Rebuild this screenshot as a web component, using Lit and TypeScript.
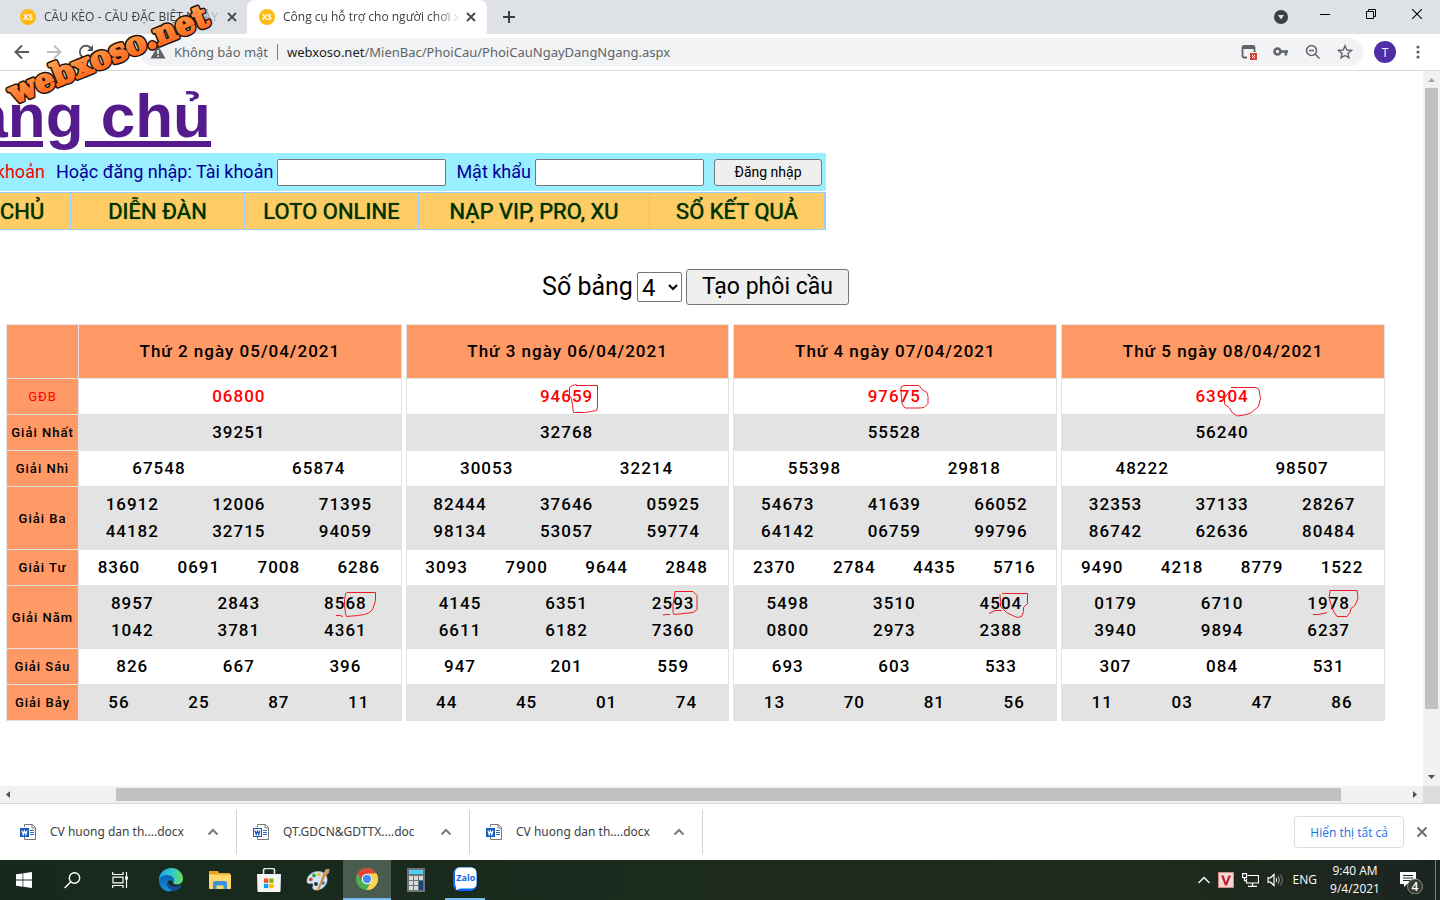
import { LitElement, html, css, svg, nothing } from "lit";
import { customElement, property } from "lit/decorators.js";

interface Draw {
  day: string;
  prizes: string[][];
}

const PRIZES: { label: string; perRow: number }[] = [
  { label: "GĐB", perRow: 1 },
  { label: "Giải Nhất", perRow: 1 },
  { label: "Giải Nhì", perRow: 2 },
  { label: "Giải Ba", perRow: 3 },
  { label: "Giải Tư", perRow: 4 },
  { label: "Giải Năm", perRow: 3 },
  { label: "Giải Sáu", perRow: 3 },
  { label: "Giải Bảy", perRow: 4 },
];

const draw = (day: string, ...rows: string[]): Draw => ({
  day,
  prizes: rows.map((r) => r.split(" ")),
});

const DRAWS: Draw[] = [
  draw("Thứ 2 ngày 05/04/2021", "06800", "39251", "67548 65874",
    "16912 12006 71395 44182 32715 94059", "8360 0691 7008 6286",
    "8957 2843 8568 1042 3781 4361", "826 667 396", "56 25 87 11"),
  draw("Thứ 3 ngày 06/04/2021", "94659", "32768", "30053 32214",
    "82444 37646 05925 98134 53057 59774", "3093 7900 9644 2848",
    "4145 6351 2593 6611 6182 7360", "947 201 559", "44 45 01 74"),
  draw("Thứ 4 ngày 07/04/2021", "97675", "55528", "55398 29818",
    "54673 41639 66052 64142 06759 99796", "2370 2784 4435 5716",
    "5498 3510 4504 0800 2973 2388", "693 603 533", "13 70 81 56"),
  draw("Thứ 5 ngày 08/04/2021", "63904", "56240", "48222 98507",
    "32353 37133 28267 86742 62636 80484", "9490 4218 8779 1522",
    "0179 6710 1978 3940 9894 6237", "307 084 531", "11 03 47 86"),
];

@customElement("prize-table")
export class PrizeTable extends LitElement {
  @property({ attribute: false }) data!: Draw;
  @property({ type: Boolean }) labelled = false;

  static styles = css`
    :host { display: block; min-width: 0; }
    table {
      width: 100%;
      border-collapse: collapse;
      table-layout: fixed;
      font: 500 17px/27px Roboto, sans-serif;
      letter-spacing: 1px;
      color: #000;
    }
    th, td {
      box-sizing: border-box;
      height: 36px;
      padding: 4px 2px 4px 0;
      border: 1px solid #e3e3e3;
      font-weight: 500;
      text-align: center;
    }
    th { padding: 4px 0; background: #f96; }
    .label-col { width: 72px; }
    .label { font-size: 13px; white-space: nowrap; }
    .day { height: 54px; }
    .grey { background: #e3e3e3; }
    .top, .top-label { color: #f00; }
    .top-label { font-weight: 400; }
    .numbers { display: grid; }
    .n1 { grid-template-columns: 1fr; }
    .n2 { grid-template-columns: repeat(2, 1fr); }
    .n3 { grid-template-columns: repeat(3, 1fr); }
    .n4 { grid-template-columns: repeat(4, 1fr); }
  `;

  render() {
    return html`<table>
      <colgroup>${this.labelled ? html`<col class="label-col" />` : nothing}<col /></colgroup>
      <thead><tr>
        ${this.labelled ? html`<th class="day"></th>` : nothing}
        <th class="day" scope="col">${this.data.day}</th>
      </tr></thead>
      <tbody>
        ${PRIZES.map((p, i) => html`<tr>
          ${this.labelled ? html`<th scope="row" class="label ${i === 0 ? "top-label" : ""}">${p.label}</th>` : nothing}
          <td class="${i % 2 ? "grey" : ""} ${i === 0 ? "top" : ""}">
            <div class="numbers n${p.perRow}">${this.data.prizes[i].map((n) => html`<span>${n}</span>`)}</div>
          </td>
        </tr>`)}
      </tbody>
    </table>`;
  }
}

const cross = svg`<path d="M1 1 9 9M9 1 1 9" stroke="#45494d" stroke-width="1.8" fill="none"/>`;
const wordIcon = (outlined: boolean) => html`<svg width="16" height="16" viewBox="0 0 16 16" aria-hidden="true">
  <path d="M4.5 3V.5h8L15.500 3.500V15.500H4.500V13" fill="#fff" stroke="#777"/><path d="M12 .5V4h3.500" fill="none" stroke="#777"/>
  <path d="M10 6.500h4M10 8.500h4M10 10.500h4" stroke="#2b6cc4"/>
  <rect x=".5" y="4.500" width="8" height="8" fill="${outlined ? "#fff" : "#185abd"}" stroke="#185abd"/>
  <path d="M2 6.500 3.200 10.500 4.500 7 5.800 10.500 7 6.500" fill="none" stroke="${outlined ? "#185abd" : "#fff"}" stroke-width="1.200"/></svg>`;
const chevron = html`<svg width="12" height="8" viewBox="0 0 12 8" aria-hidden="true"><path d="M1.500 6.500 6 2l4.500 4.500" fill="none" stroke="#777b80" stroke-width="2"/></svg>`;

@customElement("app-root")
export class AppRoot extends LitElement {
  static styles = css`
    :host { display: block; }
    * { box-sizing: border-box; }
    button { font-family: inherit; cursor: pointer; }
    svg { display: block; flex: none; }
    a { text-decoration: none; color: inherit; }
    .window {
      display: flex; flex-direction: column; height: 100vh; overflow: hidden;
      position: relative; background: #fff;
      font: 12px/16px "Open Sans", "Noto Sans", sans-serif; color: #3c4043;
    }
    .plain { border: 0; padding: 0; background: none; display: grid; place-items: center; }

    /* tab strip */
    .tabs { display: flex; height: 34px; flex: none; padding-left: 8px; background: #dee1e6; }
    .tab { display: flex; align-items: center; width: 239px; padding: 0 9px 0 12px; }
    .tab.active { width: 240px; padding-right: 10px; background: #fff; border-radius: 8px 8px 0 0; }
    .title {
      flex: 1; margin: 0 4px 0 8px; overflow: hidden; white-space: nowrap;
      mask-image: linear-gradient(90deg, #000 85%, transparent);
    }
    .close { width: 12px; height: 16px; }
    .new-tab { width: 44px; }
    .caption { display: flex; margin-left: auto; }
    .caption button { width: 46px; height: 28px; }
    .caption .search-tabs { width: 42px; height: 34px; }

    /* toolbar */
    .toolbar {
      display: flex; align-items: center; height: 37px; flex: none;
      padding: 0 6px; border-bottom: 1px solid #d9dadc;
    }
    .nav { width: 32px; height: 32px; }
    .address {
      display: flex; align-items: center; flex: 1; height: 28px; margin: 0 5px 0 38px;
      padding: 0 10px; border-radius: 14px; background: #f1f3f4;
      font-family: "Noto Sans", "Open Sans", sans-serif;
      font-size: 13px; color: #5f6368; white-space: nowrap;
    }
    .insecure { margin-left: 8px; padding-right: 9px; border-right: 1px solid #7c8084; }
    .url { flex: 1; margin-left: 9px; }
    .host { color: #202124; }
    .actions { display: flex; gap: 16px; }
    .avatar {
      width: 22px; height: 22px; margin: 0 6px; border-radius: 50%;
      background: #512da8; color: #fff; font-size: 12px;
    }
    .more { width: 32px; height: 32px; }
    .watermark { position: absolute; left: 0; top: 0; pointer-events: none; }
    .mark { font: 700 31px "DejaVu Serif", serif; }

    /* page */
    .view { flex: 1; min-height: 0; display: grid; grid-template: minmax(0, 1fr) 17px / minmax(0, 1fr) 17px; }
    .page { position: relative; overflow: hidden; font-family: Roboto, sans-serif; color: #000; }
    .clip { display: flex; justify-content: flex-end; overflow: hidden; white-space: nowrap; }
    .home { width: 211px; height: 82px; margin: 0; font: 700 62px/90px "Liberation Sans", sans-serif; }
    .home a { color: #551a8b; text-decoration: underline; }
    .login {
      width: 826px; height: 39px; padding: 0 4px; align-items: center; gap: 4px;
      background: #9ef; border-bottom: 1px solid #fff; color: #009; font-size: 18px; line-height: 24px;
    }
    .register { color: #f00; margin-right: 7px; }
    .login input { width: 169px; height: 27px; margin-right: 6px; flex: none; border: 1px solid #767676; border-radius: 2px; font-size: 16px; }
    .btn { border: 1px solid #767676; border-radius: 3px; background: #efefef; color: #000; }
    .login .btn { width: 108px; height: 27px; flex: none; padding: 0; font-size: 14px; }
    .menu { width: 826px; height: 38px; border: solid #9cf; border-width: 1px 2px 1px 0; background: #fc6; }
    .menu a {
      flex: none; width: 174px; border-left: 1px solid #9cf; text-align: center;
      font-size: 22px; line-height: 38px; color: #030; text-shadow: 0 0 1px #030;
    }
    .menu .wide { width: 231px; }
    .menu .last { width: 175px; }
    .form { display: flex; justify-content: center; align-items: center; gap: 4px; padding: 39px 32px 0 0; font-size: 25px; line-height: 36px; }
    .form select { width: 45px; height: 30px; padding: 0; font: inherit; font-size: 24px; line-height: 28px; border: 1px solid #767676; border-radius: 2px; background: #fff; }
    .form .btn { height: 36px; padding: 0 15px; font-size: 23px; line-height: 34px; }
    .boards { display: flex; gap: 4px; padding: 19px 38px 0 6px; }
    .board { flex: 81 1 0; }
    .board.first { flex: 99 1 0; }
    .ink { position: absolute; left: 0; top: 0; pointer-events: none; }
    .bar { background: #f1f1f1; display: flex; align-items: center; justify-content: space-between; }
    .bar.v { flex-direction: column; }
    .thumb { background: #c1c1c1; }
    .v .thumb { width: 13px; flex: 621; }
    .v .rest { flex: 60; }
    .h .before { flex: 99; }
    .h .thumb { height: 13px; flex: 1225; }
    .h .rest { flex: 65; }
    .corner { background: #dcdcdc; }

    /* downloads */
    .downloads {
      display: flex; align-items: center; height: 57px; flex: none;
      padding-right: 12px; border-top: 1px solid #d5d6d8;
    }
    .file { display: flex; align-items: center; width: 233px; height: 44px; padding: 0 17px 0 16px; border-right: 1px solid #d0d2d5; }
    .file:first-child { width: 237px; padding-left: 20px; }
    .name { flex: 1; margin-left: 14px; white-space: nowrap; font-family: "Noto Sans", "Open Sans", sans-serif; }
    .show-all {
      height: 32px; margin: 0 12px 0 auto; padding: 0 15px; border: 1px solid #dadce0; border-radius: 4px;
      background: #fff; color: #1a73e8; font-size: 12px;
    }

    /* taskbar */
    .taskbar { display: flex; height: 40px; flex: none; background: linear-gradient(90deg, #17291d, #1b2b1e 45%, #1f2b1d 80%, #1c2420); color: #fff; }
    .task { width: 48px; height: 40px; }
    .apps { display: flex; gap: 1px; margin-left: 3px; }
    .current { background: #4a5b4f; border-bottom: 2px solid #76b9ed; }
    .zalo { width: 40px; margin-left: 4px; border-bottom: 2px solid #76b9ed; }
    .zalo-text { font: 700 9px "Open Sans", sans-serif; }
    .tray { display: flex; align-items: center; margin-left: auto; gap: 8px; }
    .clock { width: 48px; margin-left: 6px; text-align: center; line-height: 18px; white-space: nowrap; display: flex; flex-direction: column; align-items: center; }
    .lang { margin-left: 2px; }
    .notes { width: 28px; height: 28px; margin-left: 8px; }
    .peek { width: 5px; height: 40px; margin-left: 4px; border-left: 1px solid #7a807b; }
    .badge-text { font: 600 12px "Open Sans", sans-serif; }
    .favicon-text { font: 700 8px "Open Sans", sans-serif; }
  `;

  private favicon() {
    return html`<svg width="16" height="16" viewBox="0 0 16 16" aria-hidden="true">
      <circle cx="8" cy="8" r="8" fill="#fdbb11"/>
      <text class="favicon-text" x="8" y="11" text-anchor="middle" fill="#fff">XS</text></svg>`;
  }

  private tab(title: string, active: boolean) {
    return html`<div class="tab ${active ? "active" : ""}">${this.favicon()}
      <span class="title">${title}</span>
      <button class="plain close" aria-label="Đóng"><svg width="10" height="10" viewBox="0 0 10 10">${cross}</svg></button>
    </div>`;
  }

  private file(name: string, outlined = false) {
    return html`<div class="file">${wordIcon(outlined)}<span class="name">${name}</span>
      <button class="plain" aria-label="Tùy chọn">${chevron}</button></div>`;
  }

  private ink() {
    const strokes = [
      "M576 385.500h21.500v22l-1 3-6 1-5 1h-12l-1-7-1-7-2-3v-8l3-2 4-1",
      "M901 387l3-1.500h15l3 4 5 3 1 4v7l-4 4-4 .500h-15l-3-4-1-12z",
      "M1231 387.500h25l3 2 1.500 9-2 8-7 6-5 2-9 1.500-5-3-3-5-5-4v-6l3-4 3-4",
      "M347 592.500h28.500v8l-3 9-3 3-5 2-7 1-11 1-1-3-1-8v-6l1.500-7",
      "M336 615.500h4l3 1",
      "M675 591.500h18l4 4v14l-4 3-9 1-10 1-1-2v-8l1-6z",
      "M663 615l3-.5h4",
      "M1002 593.500h25.500v10l-4 4v4l-2 5-4 1-5-2-6-3-6-6v-4l-.500-8",
      "M989 613.500l6-3h7",
      "M1330 590.500h27l1 8-3 7-4 3-1 4-3 4h-10l-4-6-2-6-2-7 1-6z",
      "M1313 614.500h5l5-1 4-1",
    ];
    return html`<svg class="ink" width="1400" height="600" viewBox="0 71 1400 600" aria-hidden="true">
      ${strokes.map((d) => svg`<path d=${d} fill="none" stroke="#ed1c24"/>`)}</svg>`;
  }

  render() {
    return html`<div class="window">
      <header class="tabs">
        ${this.tab("CẦU KÈO - CẦU ĐẶC BIỆT NGÀY (", false)}
        ${this.tab("Công cụ hỗ trợ cho người chơi xổ số", true)}
        <button class="plain new-tab" aria-label="Thẻ mới"><svg width="12" height="12" viewBox="0 0 12 12"><path d="M6 0v12M0 6h12" stroke="#3c4043" stroke-width="2"/></svg></button>
        <div class="caption">
          <button class="plain search-tabs" aria-label="Tìm thẻ"><svg width="14" height="14" viewBox="0 0 14 14"><circle cx="7" cy="7" r="7" fill="#3c4043"/><path d="M4 5h6L7 9.500z" fill="#dee1e6"/></svg></button>
          <button class="plain" aria-label="Thu nhỏ"><svg width="10" height="10" viewBox="0 0 10 10"><path d="M0 5.500h10" stroke="#000"/></svg></button>
          <button class="plain" aria-label="Khôi phục"><svg width="10" height="10" viewBox="0 0 10 10"><path d="M.5 2.500h7v7h-7zM2.500 2.500v-2h7v7h-2" fill="none" stroke="#000"/></svg></button>
          <button class="plain" aria-label="Đóng"><svg width="10" height="10" viewBox="0 0 10 10"><path d="M0 0 10 10M10 0 0 10" stroke="#000" stroke-width="1.100"/></svg></button>
        </div>
      </header>

      <div class="toolbar">
        <button class="plain nav" aria-label="Quay lại"><svg width="16" height="16" viewBox="0 0 16 16"><path d="M15 8H2M8 1.500 1.500 8 8 14.500" fill="none" stroke="#55595d" stroke-width="1.900"/></svg></button>
        <button class="plain nav" aria-label="Tiếp"><svg width="16" height="16" viewBox="0 0 16 16"><path d="M1 8h13M8 1.500 14.500 8 8 14.500" fill="none" stroke="#babcbe" stroke-width="1.900"/></svg></button>
        <button class="plain nav" aria-label="Tải lại"><svg width="16" height="16" viewBox="0 0 16 16"><path d="M13.500 5A6.200 6.200 0 1 0 14 9.500" fill="none" stroke="#55595d" stroke-width="1.900"/><path d="M15 1v6H9z" fill="#55595d"/></svg></button>
        <div class="address">
          <svg width="16" height="16" viewBox="0 0 16 16" aria-hidden="true"><path d="M8 1.500 15.500 14.500H.5z" fill="#5f6368"/><path d="M8 6v4M8 11.300v1.700" stroke="#fff" stroke-width="1.500"/></svg>
          <span class="insecure">Không bảo mật</span>
          <span class="url"><span class="host">webxoso.net</span>/MienBac/PhoiCau/PhoiCauNgayDangNgang.aspx</span>
          <div class="actions">
            <button class="plain" aria-label="Cửa sổ bật lên bị chặn"><svg width="16" height="16" viewBox="0 0 16 16"><path d="M6 13.500H3a1.500 1.500 0 0 1-1.500-1.500V3.500A1.500 1.500 0 0 1 3 2h9a1.500 1.500 0 0 1 1.500 1.500V8" fill="none" stroke="#5f6368" stroke-width="1.800"/><path d="M1.500 2h12v3h-12z" fill="#5f6368"/><path d="M9 9h7v7H9z" fill="#db4437"/><path d="M11 11l3 3M14 11l-3 3" stroke="#fff"/></svg></button>
            <button class="plain" aria-label="Mật khẩu đã lưu"><svg width="16" height="16" viewBox="0 0 16 16"><circle cx="4.500" cy="7.500" r="3" fill="none" stroke="#5f6368" stroke-width="2.600"/><path d="M7 7.500h8M12.800 8v3.500" stroke="#5f6368" stroke-width="2.600"/></svg></button>
            <button class="plain" aria-label="Thu phóng"><svg width="16" height="16" viewBox="0 0 16 16"><circle cx="6.500" cy="6.500" r="5" fill="none" stroke="#5f6368" stroke-width="1.500"/><path d="M10.300 10.300 14.500 14.500M4 6.500h5" stroke="#5f6368" stroke-width="1.500"/></svg></button>
            <button class="plain" aria-label="Đánh dấu trang"><svg width="16" height="16" viewBox="0 0 16 16"><path d="M8 1.800 9.800 6l4.700.4-3.600 3 1.100 4.500L8 11.500 4 13.900l1.100-4.500-3.600-3L6.200 6z" fill="none" stroke="#5f6368" stroke-width="1.400"/></svg></button>
          </div>
        </div>
        <button class="plain avatar" aria-label="Hồ sơ">T</button>
        <button class="plain more" aria-label="Menu"><svg width="4" height="14" viewBox="0 0 4 14" fill="#5f6368"><circle cx="2" cy="2" r="1.600"/><circle cx="2" cy="7" r="1.600"/><circle cx="2" cy="12" r="1.600"/></svg></button>
      </div>

      <div class="view">
        <main class="page">
          <h1 class="home clip"><a href="#">Trang chủ</a></h1>
          <form class="login clip" @submit=${(e: Event) => e.preventDefault()}>
            <a class="register" href="#">Đăng ký tài khoản</a>
            <label for="user">Hoặc đăng nhập: Tài khoản</label><input id="user" type="text" />
            <label for="pass">Mật khẩu</label><input id="pass" type="password" />
            <button class="btn" type="submit">Đăng nhập</button>
          </form>
          <nav class="menu clip">
            <a href="#">TRANG CHỦ</a><a href="#">DIỄN ĐÀN</a><a href="#">LOTO ONLINE</a>
            <a class="wide" href="#">NẠP VIP, PRO, XU</a><a class="last" href="#">SỔ KẾT QUẢ</a>
          </nav>
          <div class="form">
            <label for="count">Số bảng</label>
            <select id="count"><option>1</option><option>2</option><option>3</option><option selected>4</option></select>
            <button class="btn" type="button">Tạo phôi cầu</button>
          </div>
          <section class="boards">
            ${DRAWS.map((d, i) => html`<prize-table class="board ${i === 0 ? "first" : ""}" .data=${d} ?labelled=${i === 0}></prize-table>`)}
          </section>
          ${this.ink()}
        </main>
        <div class="bar v" aria-hidden="true">
          <svg width="17" height="17" viewBox="0 0 17 17"><path d="M5 11h7L8.500 7z" fill="#a3a3a3"/></svg>
          <div class="thumb"></div><div class="rest"></div>
          <svg width="17" height="17" viewBox="0 0 17 17"><path d="M5 6h7L8.500 10z" fill="#505050"/></svg>
        </div>
        <div class="bar h" aria-hidden="true">
          <svg width="17" height="17" viewBox="0 0 17 17"><path d="M10 5v7L6 8.500z" fill="#505050"/></svg>
          <div class="before"></div><div class="thumb"></div><div class="rest"></div>
          <svg width="17" height="17" viewBox="0 0 17 17"><path d="M7 5v7l4-3.500z" fill="#505050"/></svg>
        </div>
        <div class="corner"></div>
      </div>

      <section class="downloads">
        ${this.file("CV huong dan th....docx")}${this.file("QT.GDCN&GDTTX....doc", true)}${this.file("CV huong dan th....docx")}
        <button class="show-all">Hiển thị tất cả</button>
        <button class="plain" aria-label="Đóng"><svg width="12" height="12" viewBox="0 0 12 12"><path d="M1.500 1.500l9 9M10.500 1.500l-9 9" stroke="#6e7276" stroke-width="2"/></svg></button>
      </section>

      <footer class="taskbar">
        <button class="plain task" aria-label="Bắt đầu"><svg width="16" height="16" viewBox="0 0 16 16" fill="#fff"><path d="M0 2.300 6.600 1.400v6.200H0zM7.300 1.300 16 0v7.600H7.300zM0 8.400h6.600v6.300L0 13.800zM7.300 8.400H16V16l-8.700-1.300z"/></svg></button>
        <button class="plain task" aria-label="Tìm kiếm"><svg width="17" height="17" viewBox="0 0 17 17"><circle cx="10.500" cy="6" r="5.200" fill="none" stroke="#fff" stroke-width="1.400"/><path d="M6.800 9.800.7 16" stroke="#fff" stroke-width="1.500"/></svg></button>
        <button class="plain task" aria-label="Chế độ xem tác vụ"><svg width="17" height="16" viewBox="0 0 17 16"><path d="M.7 0v2.500H11V0M.7 16v-2.500H11V16M1 5.200h10v5.600H1zM14.500 0v16" fill="none" stroke="#fff" stroke-width="1.200"/><path d="M13 4.500h3v3h-3z" fill="#fff"/></svg></button>
        <div class="apps">
          <button class="plain task" aria-label="Edge"><svg width="24" height="24" viewBox="0 0 24 24">
            <defs><linearGradient id="edge-top"><stop stop-color="#1aa5e8"/><stop offset=".55" stop-color="#35c6d0"/><stop offset="1" stop-color="#66df55"/></linearGradient>
            <linearGradient id="edge-low" x2="0" y2="1"><stop stop-color="#0a5fb4"/><stop offset="1" stop-color="#1693dd"/></linearGradient></defs>
            <path d="M0 12C0 5 5.500 0 12 0c7 0 12 5 12 10.500 0 4-3 6-6 6-2.500 0-4-1-4-2 0-.6.900-1 .9-2.600C14.900 9.500 12 8 9 8c-5 0-9 2-9 7z" fill="url(#edge-top)"/>
            <path d="M0 13c.3-3.500 3.500-5.800 7.500-5.800 4.200 0 7.400 2 7.400 4.700 0 1.300-.9 1.900-.9 2.600-1-2-3-3-4.800-1.500-2.700 2.200-.7 8.500 6 9C8 26 0 20.500 0 13z" fill="url(#edge-low)"/>
            <path d="M8.500 13.500C7 18 11 23 15.500 23c3-.5 5.500-2.500 7-5 .4-.8-.3-1-.8-.700-4.700 2.300-11 1.700-13.200-3.800z" fill="#134d93"/></svg></button>
          <button class="plain task" aria-label="Thư mục"><svg width="22" height="19" viewBox="0 0 22 19"><path d="M0 0h9l1 2h11v5H0z" fill="#e9a21c"/><path d="M0 3.500h22V18H0z" fill="#ffd86b"/><path d="M4 18v-6q0-2 2-2h10q2 0 2 2v6h-3.500v-3.500h-7V18z" fill="#3c94dd"/></svg></button>
          <button class="plain task" aria-label="Store"><svg width="24" height="24" viewBox="0 0 24 24"><path d="M6.500 7V2.500q0-2 2-2h7q2 0 2 2V7" fill="none" stroke="#e8e8e8" stroke-width="1.600"/><path d="M0 6h24l-.5 17q0 1-1 1h-21q-1 0-1-1z" fill="#f5f5f5"/><path d="M7 10.500h4.300v4.300H7z" fill="#f25022"/><path d="M12.300 10.500h4.300v4.300h-4.300z" fill="#7fba00"/><path d="M7 15.800h4.300v4.300H7z" fill="#00a4ef"/><path d="M12.300 15.800h4.300v4.300h-4.300z" fill="#ffb900"/></svg></button>
          <button class="plain task" aria-label="Paint"><svg width="24" height="24" viewBox="0 0 24 24"><path d="M1 13C1 7 7 3 13 3.500c6 .5 9 5 8 10-1 5-6 8.500-11 8.500-3 0-4-2-3-4 1-2-1-3-3-2.500S1 15 1 13z" fill="#cfe3f2" stroke="#9dbdd4" stroke-width=".6"/><circle cx="4.800" cy="11.500" r="1.800" fill="#e33b32"/><circle cx="8" cy="7.500" r="1.900" fill="#39a84a"/><circle cx="13" cy="6.500" r="1.800" fill="#f0ba1b"/><circle cx="10" cy="16" r="1.900" fill="#26323a"/><circle cx="17" cy="15" r="1.800" fill="#3378d1"/><path d="M20.500 5 13 22l-1.500 1 .2-2.500L18 4z" fill="#d98a35"/><path d="M17.500 5 20 1l3.500 0-.5 4-3 2.500z" fill="#c79b6d"/></svg></button>
          <button class="plain task current" aria-label="Chrome"><svg width="24" height="24" viewBox="0 0 24 24"><circle cx="12" cy="12" r="11" fill="#4caf50"/><path d="M2.500 6.500A11 11 0 0 1 21.500 6.500L12 7a5 5 0 0 0-4.500 7.300z" fill="#e24435"/><path d="M21.500 6.500A11 11 0 0 1 11.500 23L16.300 14.500A5 5 0 0 0 12 6.500z" fill="#fdd34d"/><circle cx="12" cy="12" r="5.300" fill="#fff"/><circle cx="12" cy="12" r="4.200" fill="#4489f4"/></svg></button>
          <button class="plain task" aria-label="Máy tính"><svg width="18" height="24" viewBox="0 0 18 24"><rect width="18" height="24" rx="1" fill="#6d7478"/><path d="M2 2h14v4H2z" fill="#4fd0f5"/><path d="M2 8h4v4H2zM7 8h4v4H7zM12 8h4v4h-4zM2 13h4v4H2zM7 13h4v4H7zM2 18h4v4H2zM7 18h4v4H7z" fill="#d8dcde"/><path d="M12 13h4v9h-4z" fill="#13477d"/></svg></button>
          <button class="plain task zalo" aria-label="Zalo"><svg width="24" height="24" viewBox="0 0 24 24"><rect width="24" height="24" rx="7" fill="#0a68f5"/><path d="M7 .5h11q5.500 0 5.500 6v10q0 5-5.500 5H8q-2 0-3 1l-2.500.5 1-2Q2 19 2 16V6Q2 .5 7 .5z" fill="#fff"/><text class="zalo-text" x="12.800" y="14" text-anchor="middle" fill="#1467e8">Zalo</text></svg></button>
        </div>
        <div class="tray">
          <svg width="12" height="8" viewBox="0 0 12 8" aria-hidden="true"><path d="M.5 7 6 1.500 11.500 7" fill="none" stroke="#fff" stroke-width="1.300"/></svg>
          <svg width="16" height="16" viewBox="0 0 16 16" aria-hidden="true"><path d="M0 0h16v16H0z" fill="#d98a88"/><path d="M1 1h14v14H1z" fill="#f4d7d5"/><path d="M3 3.500h2.500L8 10.500l2.500-7H13l-4 10H7z" fill="#c01f25"/></svg>
          <svg width="17" height="14" viewBox="0 0 17 14" aria-hidden="true"><path d="M5.500 2.500h11v7.500H4.500V6M10.500 10v3M6 13.300h9" fill="none" stroke="#fff" stroke-width="1.200"/><path d="M.6.6h4v4h-4zM2.500 4.600v3H5" fill="none" stroke="#fff" stroke-width="1.100"/></svg>
          <svg width="16" height="14" viewBox="0 0 16 14" aria-hidden="true"><path d="M1 4.800h2.500L7 1.500v11L3.500 9.200H1z" fill="none" stroke="#fff" stroke-width="1.200"/><path d="M9 5q1.500 2 0 4" fill="none" stroke="#fff"/><path d="M11 3.200q3 3.800 0 7.600" fill="none" stroke="#b9beb9"/><path d="M13 1.200q4.500 5.800 0 11.600" fill="none" stroke="#7c837d"/></svg>
          <span class="lang">ENG</span>
          <time class="clock"><span>9:40 AM</span><span>9/4/2021</span></time>
          <button class="plain notes" aria-label="Thông báo"><svg width="28" height="28" viewBox="0 0 28 28"><path d="M5 6h16v12h-9l-3 3v-3H5z" fill="#fff"/><path d="M8 9.500h10M8 12h10M8 14.500h7" stroke="#1d281e"/><circle cx="20" cy="20.500" r="7.500" fill="#333a35" stroke="#8b918c"/><text class="badge-text" x="20" y="25" text-anchor="middle" fill="#fff">4</text></svg></button>
          <div class="peek"></div>
        </div>
      </footer>

      <svg class="watermark" width="240" height="120" viewBox="0 0 240 120" aria-hidden="true">
        <defs><linearGradient id="mark-fill" x2="0" y2="1"><stop stop-color="#ffa95a"/><stop offset="1" stop-color="#ff5f14"/></linearGradient></defs>
        <g transform="rotate(-22 14 104)" stroke-linejoin="round">
          <text class="mark" x="14" y="104" fill="url(#mark-fill)" stroke="#1c1208" stroke-width="5" paint-order="stroke">webxoso.net</text>
          <text class="mark" x="14" y="104" fill="url(#mark-fill)" stroke="url(#mark-fill)" stroke-width="2" aria-hidden="true">webxoso.net</text>
        </g>
      </svg>
    </div>`;
  }
}
